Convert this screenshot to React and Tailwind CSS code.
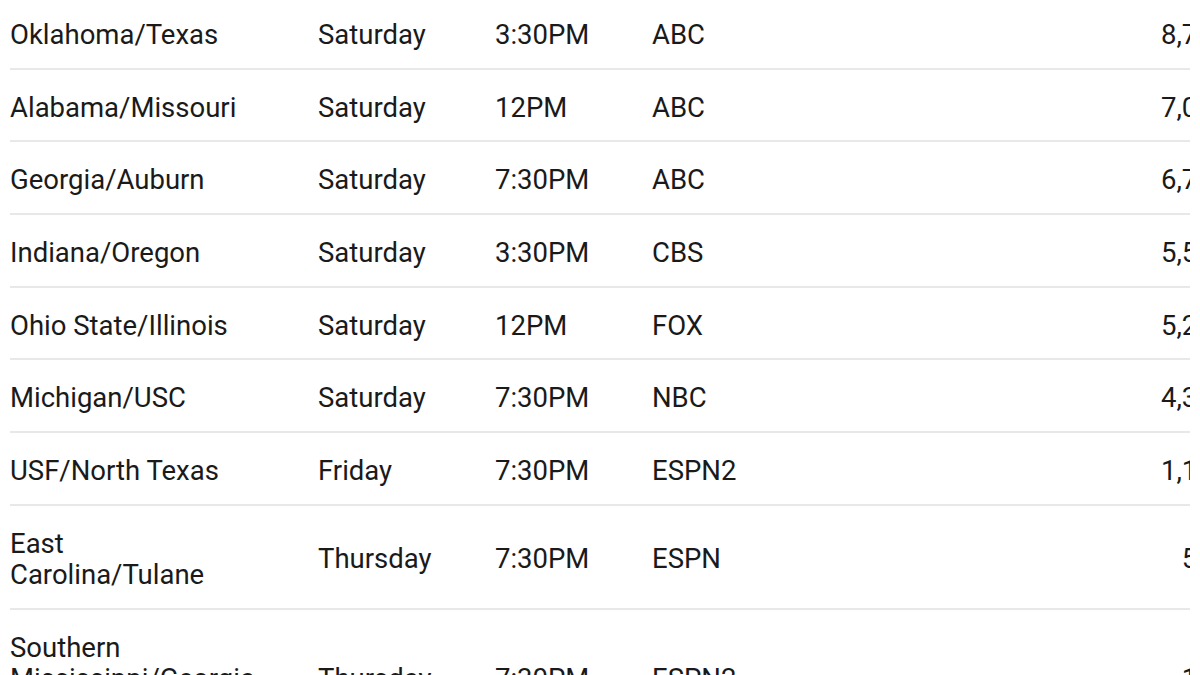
import React from "react";

const rows = [
  ["Oklahoma/Texas", "Saturday", "3:30PM", "ABC", "8,740,000"],
  ["Alabama/Missouri", "Saturday", "12PM", "ABC", "7,030,000"],
  ["Georgia/Auburn", "Saturday", "7:30PM", "ABC", "6,720,000"],
  ["Indiana/Oregon", "Saturday", "3:30PM", "CBS", "5,540,000"],
  ["Ohio State/Illinois", "Saturday", "12PM", "FOX", "5,260,000"],
  ["Michigan/USC", "Saturday", "7:30PM", "NBC", "4,350,000"],
  ["USF/North Texas", "Friday", "7:30PM", "ESPN2", "1,160,000"],
  ["East Carolina/Tulane", "Thursday", "7:30PM", "ESPN", "541,000"],
  ["Southern Mississippi/Georgia State", "Thursday", "7:30PM", "ESPN2", "195,000"],
];

export default function App() {
  return (
    <div
      className="w-[1200px] h-[675px] overflow-hidden bg-white text-[#1a1a1a]"
      style={{ fontFamily: "Roboto, 'Noto Sans', sans-serif" }}
    >
      <div className="ml-[10px] w-[1180px] overflow-hidden mt-[-3px]">
        <div className="w-[1270px]">
          {rows.map((r, i) => (
            <div
              key={i}
              className="flex items-center border-b-2 border-[#e8e8e8] pt-[22px] pb-[17.7px] text-[27.5px] leading-[31px]"
            >
              <div className="w-[308px] shrink-0 pr-[60px]">{r[0]}</div>
              <div className="w-[177px] shrink-0">{r[1]}</div>
              <div className="w-[157px] shrink-0">{r[2]}</div>
              <div className="flex-1">{r[3]}</div>
              <div className="text-right">{r[4]}</div>
            </div>
          ))}
        </div>
      </div>
    </div>
  );
}
